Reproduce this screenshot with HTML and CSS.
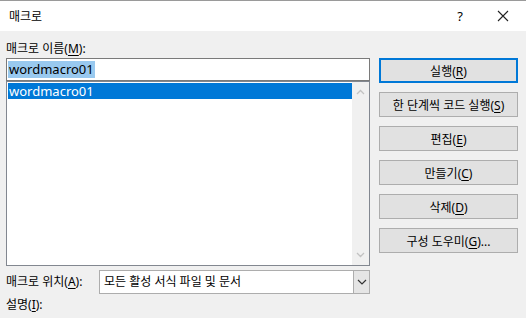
FILE: index.html
```html
<!DOCTYPE html>
<html lang="ko">
<head>
    <meta charset="UTF-8">
    <title>매크로</title>
    <link rel="stylesheet" href="styles.css">
</head>
<body>
    <div class="titlebar">
        <span class="title">매크로</span>
        <span class="help">?</span>
        <svg class="close" width="12" height="12" viewBox="0 0 12 12">
            <path d="M1 1 L11 11 M11 1 L1 11" stroke="#222" stroke-width="1.1" fill="none"/>
        </svg>
    </div>

    <main class="dialog">
        <div class="left">
            <div class="label">매크로 이름(<u>M</u>):</div>
            <div class="name-input"><span class="sel">wordmacro01</span></div>
            <div class="listbox">
                <div class="items">
                    <div class="item active">wordmacro01</div>
                </div>
                <div class="scrollbar">
                    <svg width="9" height="6" viewBox="0 0 9 6"><path d="M1 5 L4.5 1.5 L8 5" stroke="#c2c2c2" stroke-width="1.3" fill="none"/></svg>
                    <svg width="9" height="6" viewBox="0 0 9 6"><path d="M1 1 L4.5 4.5 L8 1" stroke="#c2c2c2" stroke-width="1.3" fill="none"/></svg>
                </div>
            </div>
            <div class="location">
                <span class="label">매크로 위치(<u>A</u>):</span>
                <div class="combo">
                    <span class="combo-text">모든 활성 서식 파일 및 문서</span>
                    <span class="combo-btn">
                        <svg width="10" height="6" viewBox="0 0 10 6"><path d="M1 1 L5 5 L9 1" stroke="#333" stroke-width="1.2" fill="none"/></svg>
                    </span>
                </div>
            </div>
            <div class="label desc">설명(<u>I</u>):</div>
        </div>

        <div class="buttons">
            <button class="btn default">실행(<u>R</u>)</button>
            <button class="btn">한 단계씩 코드 실행(<u>S</u>)</button>
            <button class="btn">편집(<u>E</u>)</button>
            <button class="btn">만들기(<u>C</u>)</button>
            <button class="btn">삭제(<u>D</u>)</button>
            <button class="btn">구성 도우미(<u>G</u>)...</button>
        </div>
    </main>
</body>
</html>
```

FILE: styles.css
```css
body {
    margin: 0;
    width: 526px;
    height: 318px;
    overflow: hidden;
    background-color: #f0f0f0;
    color: #000;
    font-family: "Segoe UI", "Noto Sans", "Noto Sans CJK KR", sans-serif;
    font-size: 12px;
}

u {
    text-decoration-thickness: 1px;
    text-underline-offset: 2px;
}

.titlebar {
    height: 30px;
    background: #ffffff;
    border-top: 1px solid #9a9a9a;
    display: flex;
    align-items: center;
    padding: 0 17px 0 9px;
}

.title {
    flex: 1;
    font-size: 12px;
}

.help {
    font-family: "Noto Sans", sans-serif;
    font-size: 13px;
    margin-right: 34px;
}

.dialog {
    display: flex;
    gap: 9px;
    padding: 0 8px 0 6px;
}

.left {
    width: 364px;
}

.label {
    line-height: 18px;
    margin-top: 9px;
}

.label.desc {
    margin-top: 3px;
    line-height: 16px;
}

.name-input {
    height: 21px;
    background: #fff;
    border: 1px solid #7a7a7a;
    display: flex;
    align-items: center;
    padding-left: 1px;
    font-size: 13px;
}

.sel {
    background: #99c9ef;
    line-height: 17px;
    padding: 0 1px;
}

.listbox {
    height: 183px;
    background: #fff;
    border: 1px solid #828790;
    display: flex;
}

.items {
    flex: 1;
    padding: 1px 0 0 1px;
}

.item {
    height: 16px;
    line-height: 16px;
    padding-left: 1px;
    font-size: 13px;
}

.item.active {
    background: #0078d7;
    color: #fff;
}

.scrollbar {
    width: 17px;
    background: #f0f0f0;
    display: flex;
    flex-direction: column;
    justify-content: space-between;
    align-items: center;
    padding: 7px 0 7px;
}

.location {
    display: flex;
    align-items: center;
    margin-top: 4px;
}

.location .label {
    margin: 0;
    width: 93px;
}

.combo {
    flex: 1;
    height: 22px;
    background: #fff;
    border: 1px solid #adadad;
    display: flex;
}

.combo-text {
    flex: 1;
    line-height: 22px;
    padding-left: 4px;
}

.combo-btn {
    width: 15px;
    background: #e5e5e5;
    border: 1px solid #adadad;
    margin: -1px -1px -1px 0;
    display: flex;
    align-items: center;
    justify-content: center;
}

.buttons {
    width: 139px;
    display: flex;
    flex-direction: column;
    gap: 9px;
    padding-top: 27px;
}

.btn {
    height: 25px;
    background: #e1e1e1;
    border: 1px solid #adadad;
    font-family: inherit;
    font-size: 12px;
    color: #000;
    padding: 0;
}

.btn.default {
    border: 2px solid #0078d7;
}
```
